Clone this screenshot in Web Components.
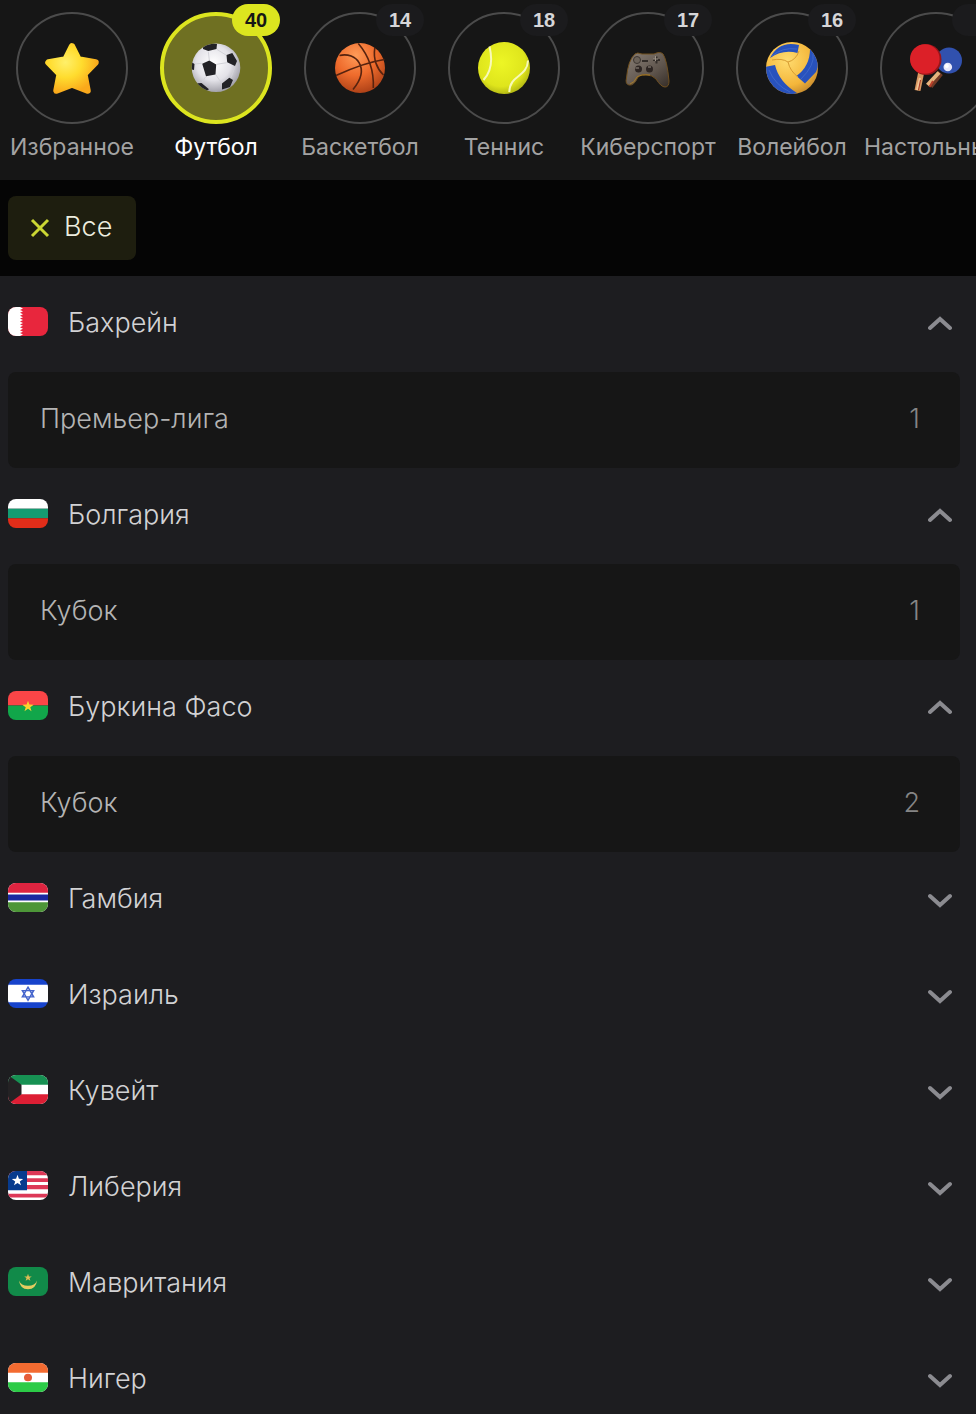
<!DOCTYPE html>
<html lang="ru">
<head>
    <meta charset="utf-8">
    <meta name="viewport" content="width=device-width, initial-scale=1">
    <title>Линия</title>
    <style>
        body {
            margin: 0;
            min-height: 100vh;
            background: #1d1d20;
            color: #d2d2d4;
            font-family: Inter, "Liberation Sans", sans-serif;
            font-size: 27px;
            font-weight: 350;
        }
    </style>
</head>
<body>
    <sports-page></sports-page>

    <script>
        const defineComponent = ({ title, template, styles, functionality }) => {
            const componentTemplate = document.createElement('template');
            componentTemplate.innerHTML = `<style>${styles}</style>${template}`;

            class Component extends HTMLElement {
                constructor() {
                    super();
                    this.attachShadow({ mode: 'open' });
                    this.shadowRoot.appendChild(componentTemplate.content.cloneNode(true));
                }

                connectedCallback() {
                    if (functionality) {
                        functionality({ host: this, component: this.shadowRoot });
                    }
                }
            }

            window.customElements.define(title, Component);
        };

        const star = (cx, cy, r) => {
            const points = [];
            for (let i = 0; i < 10; i++) {
                const radius = i % 2 ? r * 0.4 : r;
                const angle = Math.PI * (i / 5 - 0.5);
                points.push(`${(cx + radius * Math.cos(angle)).toFixed(2)},${(cy + radius * Math.sin(angle)).toFixed(2)}`);
            }
            return points.join(' ');
        };

        // 60x60 each
        const sportIcons = {
            favorite: `
                <defs>
                    <radialGradient id="g" cx=".36" cy=".36" r=".7"><stop offset="0" stop-color="#fff06a"/><stop offset=".5" stop-color="#ffdc2e"/><stop offset="1" stop-color="#faa91b"/></radialGradient>
                </defs>
                <path d="M30 8.500 36.500 21.500 53.500 24.500 42.300 36 45.500 52.500 30 46.500 14.500 52.500 17.700 36 6.500 24.500 23.500 21.500Z" fill="url(#g)" stroke="url(#g)" stroke-width="6.500" stroke-linejoin="round"/>`,
            football: `
                <defs>
                    <radialGradient id="g" cx=".45" cy=".4" r=".6"><stop offset="0" stop-color="#fff"/><stop offset=".6" stop-color="#e3e2e8"/><stop offset="1" stop-color="#a3a2ab"/></radialGradient>
                    <clipPath id="c"><circle cx="30" cy="29.700" r="24.300"/></clipPath>
                </defs>
                <circle cx="30" cy="29.700" r="24.300" fill="url(#g)"/>
                <g clip-path="url(#c)">
                    <path d="M23.300 22 22.300 13.700M30.700 26.300 40.700 24.700M30 37 35.700 45.300M19.700 38.700 15.700 44.700M15.700 25.300 9 26M30.700 11.300 40 17M49 28.700 45 39.500" stroke="#d2d2d8" fill="none"/>
                    <g fill="#222226">
                        <path d="M16.200 25.800 23.300 22.500 30.200 26.500 29.500 36.500 20 38.200ZM17.300 6.500 25 4.500 31 6 30.500 11 22.300 13 17 11ZM40.500 17 46.300 15 51 23 49 28 41.200 24.200ZM36 45.500 43.300 39.800 47 42 44 49 36 51.500ZM9 45.500 15.500 45 23 51.300 17 55ZM4 23 8.500 26 8 32 4 31Z"/>
                    </g>
                </g>`,
            basketball: `
                <defs>
                    <radialGradient id="g" cx=".42" cy=".25" r=".8"><stop offset="0" stop-color="#ff9b58"/><stop offset=".5" stop-color="#ee6b2c"/><stop offset="1" stop-color="#a83d15"/></radialGradient>
                </defs>
                <circle cx="30" cy="30" r="25" fill="url(#g)"/>
                <path d="M6 37.500C18 32 38 24 54.500 21.500M9.500 17.500C26 13.500 41 30 23 51.500M28.300 5.500C39 18 44 34 43.300 50M44.800 10C43 21 47 31 53.500 37" fill="none" stroke="#57230f" stroke-width="1.600"/>`,
            tennis: `
                <defs>
                    <radialGradient id="g" cx=".45" cy=".4" r=".65"><stop offset="0" stop-color="#edf625"/><stop offset=".7" stop-color="#dfe51c"/><stop offset="1" stop-color="#a9ad12"/></radialGradient>
                </defs>
                <circle cx="30" cy="30" r="26" fill="url(#g)"/>
                <path d="M15.500 8.500C18.500 21 18 33 9.500 42M54 22.500C53 40 36 36 35.300 54" fill="none" stroke="#f8f9b9" stroke-width="2"/>`,
            esports: `
                <defs>
                    <linearGradient id="g" x2="1" y2="1"><stop offset="0" stop-color="#8a8077"/><stop offset=".6" stop-color="#5f554d"/><stop offset="1" stop-color="#352d27"/></linearGradient>
                </defs>
                <path d="M17 16Q19 14 24 16H36Q42 13 45 16Q49 22 51 43Q51 49 47 49Q43 49 38 41Q34 37 29 37Q23 36 20 39Q16 48 11 47Q7 46 8.500 40Q10 22 17 16Z" fill="url(#g)" stroke="#70501f"/>
                <path d="M12 46Q16 45 19 39Q23 36 32 37" fill="none" stroke="#a67a25"/>
                <circle cx="19" cy="22" r="3.500" fill="#6c635a" stroke="#3e3732"/>
                <path d="M24 23H30M35 22H42M38.500 18.500V25.500" stroke="#332d29" stroke-width="2"/>
                <g fill="#2d2522"><circle cx="20.500" cy="31" r="3.500"/><circle cx="31.500" cy="31" r="3.500"/></g>
                <path d="M35 21H40M37.500 18V23M17.500 30H21M30 29H33" stroke="#9a9085"/>`,
            volleyball: `
                <defs>
                    <radialGradient id="g" cx=".4" cy=".35" r=".7"><stop offset="0" stop-color="#ffdc70"/><stop offset=".7" stop-color="#f4b63a"/><stop offset="1" stop-color="#c68a2e"/></radialGradient>
                    <clipPath id="c"><circle cx="30" cy="30" r="26"/></clipPath>
                </defs>
                <circle cx="30" cy="30" r="26" fill="url(#g)"/>
                <g clip-path="url(#c)">
                    <path d="M8 20Q17 2 37 7L35.500 15Q21 11 8 20ZM48 11Q60 21 54 34L43 45.500 34.500 38Q48 28 48 11ZM3 29 13 27Q17 44 35 55Q17 62 3 42Z" fill="#2852bd"/>
                    <path d="M10 18Q20 9 35 11M51 16Q53 27 39 41M7 32Q13 47 28 54" fill="none" stroke="#3f67c8"/>
                    <path d="M10 22Q20 20 26 24Q28 33 36 39M26 24Q34 22 37 13" fill="none" stroke="#d79c33"/>
                </g>`,
            tabletennis: `
                <circle cx="43" cy="22.500" r="13" fill="#3151ae"/>
                <path d="M34.500 35 24 48" stroke="#713a26" stroke-width="6"/>
                <path d="M33 34.500 21.500 47" stroke="#e7b37d" stroke-width="4"/>
                <path d="M27 43 23.500 49" stroke="#b93e29" stroke-width="2"/>
                <path d="M15.500 33 11.500 52.500" stroke="#d99862" stroke-width="6"/>
                <path d="M14 40 11 52" stroke="#f0c496" stroke-width="2"/>
                <path d="M14.500 42 12.500 52" stroke="#a93626"/>
                <circle cx="20" cy="21.500" r="15.500" fill="#97161a"/>
                <circle cx="18.800" cy="21" r="14.800" fill="#dc2028"/>
                <circle cx="41.800" cy="29" r="4.300" fill="#e9e9fa"/>
                <circle cx="40.800" cy="28" r="2" fill="#fff"/>`
        };

        // 40x30 each
        const flags = {
            bahrain: `<path fill="#e8263d" d="M0 0h40v30H0z"/><path fill="#fff" d="M0 0h12l3 1.500-3 1.500 3 1.500-3 1.500 3 1.500-3 1.500 3 1.500-3 1.500 3 1.500-3 1.500 3 1.500-3 1.500 3 1.500-3 1.500 3 1.500-3 1.500 3 1.500-3 1.500 3 1.500-3 1.500H0z"/>`,
            bulgaria: `<path fill="#fff" d="M0 0h40v10H0z"/><path fill="#159b72" d="M0 10h40v10H0z"/><path fill="#e12d19" d="M0 20h40v10H0z"/>`,
            burkina: `<path fill="#fb4547" d="M0 0h40v15H0z"/><path fill="#11a64a" d="M0 15h40v15H0z"/><polygon fill="#fcd22f" points="${star(20, 16, 6)}"/>`,
            gambia: `<path fill="#fff" d="M0 0h40v30H0z"/><path fill="#df2440" d="M0 0h40v10H0z"/><path fill="#1b28a0" d="M0 12h40v6H0z"/><path fill="#4d9638" d="M0 20h40v10H0z"/>`,
            israel: `<path fill="#1743cb" d="M0 0h40v30H0z"/><path fill="#fff" d="M0 6h40v18H0z"/><path fill="none" stroke="#4464cc" stroke-width="1.500" d="M20 8.500 25.600 18.500H14.400ZM20 22 14.400 12H25.600Z"/>`,
            kuwait: `<path fill="#fff" d="M0 0h40v30H0z"/><path fill="#179153" d="M0 0h40v10H0z"/><path fill="#dd1e34" d="M0 20h40v10H0z"/><path fill="#242224" d="M0 0 13.500 10V20L0 30z"/>`,
            liberia: `<path fill="#fff" d="M0 0h40v30H0z"/><path fill="#dd3857" d="M0 0h40v4.500H0zM0 7.500h40v4H0zM0 14.500h40v4.500H0zM0 23.500h40v4H0z"/><path fill="#073b8e" d="M0 0h19v20H0z"/><polygon fill="#fff" points="${star(9.5, 10, 6)}"/>`,
            mauritania: `<path fill="#118a49" d="M0 0h40v30H0z"/><path fill="#e3cc61" d="M11 14Q13 19.500 20 19.500Q27 19.500 29 14Q28 23 20 23Q12 23 11 14Z"/><polygon fill="#dfbd56" points="${star(20, 11, 4)}"/>`,
            niger: `<path fill="#fff" d="M0 0h40v30H0z"/><path fill="#f36b31" d="M0 0h40v10H0z"/><path fill="#2ccb47" d="M0 20h40v10H0z"/><circle cx="20" cy="15" r="4" fill="#e65c38"/>`
        };

        defineComponent({
            title: 'sport-tab',
            template: `
                <button type="button">
                    <span class="ring">
                        <svg viewBox="0 0 60 60" aria-hidden="true"></svg>
                        <slot name="count"></slot>
                    </span>
                    <span class="label"><slot></slot></span>
                </button>`,
            styles: `
                :host {
                    display: block;
                    flex: 0 0 144px;
                    min-width: 0;
                }
                button {
                    display: flex;
                    flex-direction: column;
                    align-items: center;
                    gap: 7px;
                    width: 100%;
                    padding: 0;
                    border: 0;
                    background: none;
                    color: #a3a3a3;
                    font: inherit;
                    cursor: pointer;
                }
                .ring {
                    position: relative;
                    display: flex;
                    align-items: center;
                    justify-content: center;
                    box-sizing: border-box;
                    width: 112px;
                    height: 112px;
                    border: 2px solid #4b4b4b;
                    border-radius: 50%;
                }
                svg {
                    width: 60px;
                    height: 60px;
                }
                ::slotted([slot=count]) {
                    position: absolute;
                    top: -10px;
                    right: -10px;
                    width: 48px;
                    height: 32px;
                    border-radius: 16px;
                    background: #1b1b1d;
                    color: #d6d6d8;
                    font: bold 20px/32px "Liberation Sans", Arial, sans-serif;
                    text-align: center;
                }
                .label {
                    max-width: 100%;
                    overflow: hidden;
                    font-size: 23px;
                    font-weight: 400;
                    line-height: 32px;
                    text-overflow: ellipsis;
                    white-space: nowrap;
                }
                :host([active]) button {
                    color: #fff;
                }
                :host([active]) .ring {
                    border: 4px solid #dce51f;
                    background: #6f7022;
                }
                :host([active]) ::slotted([slot=count]) {
                    top: -12px;
                    right: -12px;
                    background: #dce51f;
                    color: #161616;
                }`,
            functionality: ({ host, component }) => {
                component.querySelector('svg').innerHTML = sportIcons[host.getAttribute('icon')];
                component.querySelector('button').setAttribute('aria-pressed', host.hasAttribute('active'));
            }
        });

        defineComponent({
            title: 'filter-chip',
            template: `
                <button type="button">
                    <svg viewBox="0 0 16 16" aria-hidden="true"><path d="M0 0 16 16M16 0 0 16"/></svg>
                    <span><slot></slot></span>
                </button>`,
            styles: `
                :host {
                    display: block;
                }
                button {
                    display: flex;
                    align-items: center;
                    gap: 16px;
                    height: 64px;
                    padding: 0 24px;
                    border: 0;
                    border-radius: 8px;
                    background: #1e1e0f;
                    color: #ededdf;
                    font: inherit;
                    cursor: pointer;
                }
                span {
                    padding-bottom: 4px;
                }
                svg {
                    width: 16px;
                    height: 16px;
                    overflow: visible;
                    fill: none;
                    stroke: #cbd733;
                    stroke-width: 3;
                }`
        });

        defineComponent({
            title: 'league-link',
            template: `<a href="#"><slot></slot><slot name="count"></slot></a>`,
            styles: `
                :host {
                    display: block;
                }
                a {
                    display: flex;
                    align-items: center;
                    justify-content: space-between;
                    box-sizing: border-box;
                    height: 96px;
                    padding: 0 40px 4px 32px;
                    border-radius: 8px;
                    background: #161616;
                    color: #b4b4b4;
                    text-decoration: none;
                }
                ::slotted([slot=count]) {
                    color: #858585;
                }`
        });

        defineComponent({
            title: 'country-group',
            template: `
                <button type="button">
                    <svg class="flag" viewBox="0 0 40 30" preserveAspectRatio="none" aria-hidden="true"></svg>
                    <span class="name"></span>
                    <svg class="arrow" viewBox="0 0 24 16" aria-hidden="true"><path d="M2 4 12 13 22 4"/></svg>
                </button>
                <div class="leagues"><slot></slot></div>`,
            styles: `
                :host {
                    display: block;
                }
                button {
                    display: flex;
                    align-items: center;
                    gap: 20px;
                    width: 100%;
                    height: 96px;
                    padding: 0 8px 0 0;
                    border: 0;
                    background: none;
                    color: inherit;
                    font: inherit;
                    text-align: left;
                    cursor: pointer;
                }
                .flag {
                    width: 40px;
                    height: 29px;
                    margin-bottom: 5px;
                    border-radius: 8px;
                }
                .name {
                    flex: 1;
                    padding-bottom: 4px;
                }
                .arrow {
                    width: 24px;
                    height: 16px;
                    fill: none;
                    stroke: #8b8b90;
                    stroke-width: 4;
                    stroke-linecap: round;
                }
                .leagues {
                    display: none;
                }
                :host([open]) .leagues {
                    display: block;
                }
                :host([open]) .arrow {
                    transform: rotate(180deg);
                }`,
            functionality: ({ host, component }) => {
                const button = component.querySelector('button');
                component.querySelector('.flag').innerHTML = flags[host.getAttribute('flag')];
                component.querySelector('.name').textContent = host.getAttribute('name');
                button.setAttribute('aria-expanded', host.hasAttribute('open'));
                button.onclick = () => {
                    button.setAttribute('aria-expanded', host.toggleAttribute('open'));
                };
            }
        });

        defineComponent({
            title: 'sports-page',
            template: `
                <nav>
                    <sport-tab icon="favorite">Избранное</sport-tab>
                    <sport-tab icon="football" active>Футбол<span slot="count">40</span></sport-tab>
                    <sport-tab icon="basketball">Баскетбол<span slot="count">14</span></sport-tab>
                    <sport-tab icon="tennis">Теннис<span slot="count">18</span></sport-tab>
                    <sport-tab icon="esports">Киберспорт<span slot="count">17</span></sport-tab>
                    <sport-tab icon="volleyball">Волейбол<span slot="count">16</span></sport-tab>
                    <sport-tab icon="tabletennis">Настольный теннис<span slot="count"></span></sport-tab>
                </nav>
                <div class="filters">
                    <filter-chip>Все</filter-chip>
                </div>
                <main>
                    <country-group flag="bahrain" name="Бахрейн" open>
                        <league-link>Премьер-лига<span slot="count">1</span></league-link>
                    </country-group>
                    <country-group flag="bulgaria" name="Болгария" open>
                        <league-link>Кубок<span slot="count">1</span></league-link>
                    </country-group>
                    <country-group flag="burkina" name="Буркина Фасо" open>
                        <league-link>Кубок<span slot="count">2</span></league-link>
                    </country-group>
                    <country-group flag="gambia" name="Гамбия"></country-group>
                    <country-group flag="israel" name="Израиль"></country-group>
                    <country-group flag="kuwait" name="Кувейт"></country-group>
                    <country-group flag="liberia" name="Либерия"></country-group>
                    <country-group flag="mauritania" name="Мавритания"></country-group>
                    <country-group flag="niger" name="Нигер"></country-group>
                </main>`,
            styles: `
                :host {
                    display: block;
                }
                nav {
                    display: flex;
                    padding: 12px 0 17px;
                    overflow-x: auto;
                    scrollbar-width: none;
                    background: #161616;
                }
                .filters {
                    display: flex;
                    padding: 16px 8px;
                    background: #050505;
                }
                main {
                    padding: 0 16px 0 8px;
                }`
        });
    </script>
</body>
</html>
